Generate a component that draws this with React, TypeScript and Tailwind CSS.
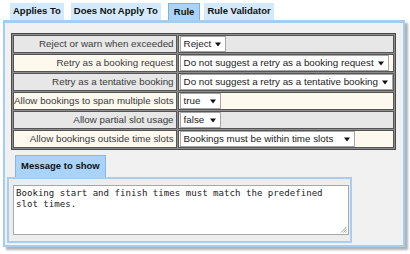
import React from "react";

interface RuleRow {
  label: string;
  value: string;
  selectClass: string;
  cream: boolean;
}

const rows: RuleRow[] = [
  { label: "Reject or warn when exceeded", value: "Reject", selectClass: "w-[46px]", cream: false },
  { label: "Retry as a booking request", value: "Do not suggest a retry as a booking request", selectClass: "w-[209px]", cream: true },
  { label: "Retry as a tentative booking", value: "Do not suggest a retry as a tentative booking", selectClass: "w-[213px]", cream: false },
  { label: "Allow bookings to span multiple slots", value: "true", selectClass: "w-[41px]", cream: true },
  { label: "Allow partial slot usage", value: "false", selectClass: "w-[41px]", cream: false },
  { label: "Allow bookings outside time slots", value: "Bookings must be within time slots", selectClass: "w-[175px]", cream: true },
];

const Arrow = () => (
  <svg width="6" height="5" viewBox="0 0 6 5" className="shrink-0">
    <path d="M0 0.5h6L3 4.5z" fill="#111" />
  </svg>
);

const FakeSelect: React.FC<{ value: string; className: string }> = ({ value, className }) => (
  <div
    className={`${className} h-[16px] flex items-center justify-between bg-white border border-[#a7a7a7] pl-[3px] pr-[4px] text-[#222] whitespace-nowrap`}
  >
    <span>{value}</span>
    <Arrow />
  </div>
);

const App: React.FC = () => {
  return (
    <div className="w-[410px] h-[254px] bg-white pt-[3px] font-['Liberation_Sans',Arial,sans-serif] text-[9.8px] overflow-hidden">
      {/* Tabs */}
      <div className="flex pl-[10px] h-[17px] font-bold text-[9.5px] text-[#111]">
        <div className="h-[17px] px-[3px] flex items-center bg-[#d3eafc]">Applies To</div>
        <div className="ml-[7px] h-[17px] px-[3px] flex items-center bg-[#d3eafc]">Does Not Apply To</div>
        <div className="ml-[7px] h-[17px] px-[5px] flex items-center bg-[#a9d3f8] border border-b-0 border-[#7fb1de]">
          Rule
        </div>
        <div className="ml-[4px] h-[17px] px-[3px] flex items-center bg-[#d3eafc]">Rule Validator</div>
      </div>

      {/* Main panel */}
      <div className="ml-[3px] w-[402px] h-[227px] border-2 border-t-[3px] border-[#a4cdf2] bg-[#f1f1f1] shadow-[3px_3px_2px_rgba(0,0,0,0.3)] pl-[6px] pt-[10px]">
        <table className="w-[383px] border-separate border-spacing-[1px] bg-[#8c8c8c] border border-[#4a4a4a]">
          <tbody>
            {rows.map((r) => (
              <tr key={r.label} className={r.cream ? "bg-[#fdf9ef]" : "bg-[#e7e7e7]"}>
                <td className="w-[163px] h-[18px] p-0 pr-[2px] border border-[#555] text-right text-[#3a3a3a] whitespace-nowrap">
                  {r.label}
                </td>
                <td className="h-[18px] p-0 pl-[1px] border border-[#555]">
                  <FakeSelect value={r.value} className={r.selectClass} />
                </td>
              </tr>
            ))}
          </tbody>
        </table>

        {/* Message section */}
        <div className="ml-[-4px] mt-[5px]">
          <div className="ml-[8px] w-fit h-[22px] flex items-center px-[5px] font-bold text-[9.5px] text-[#111] whitespace-nowrap bg-[#a9d3f9] border border-b-0 border-[#88b7e0]">
            Message to show
          </div>
          <div className="w-[345px] h-[66px] border-2 border-[#a6cef2] bg-[#ededed] pl-[4px] pt-[6px]">
            <div className="relative w-[336px] h-[50px] bg-white border border-[#a8a8a8] px-[2px] pt-[2px] font-['DejaVu_Sans_Mono',monospace] text-[9.1px] leading-[11px] text-[#222]">
              Booking start and finish times must match the predefined
              <br />
              slot times.
              <svg width="7" height="7" viewBox="0 0 7 7" className="absolute right-[1px] bottom-[1px]">
                <path d="M6.5 1L1 6.5M6.5 3.5L3.5 6.5M6.5 5.5L5.5 6.5" stroke="#9a9a9a" strokeWidth="1" />
              </svg>
            </div>
          </div>
        </div>
      </div>
    </div>
  );
};

export default App;
